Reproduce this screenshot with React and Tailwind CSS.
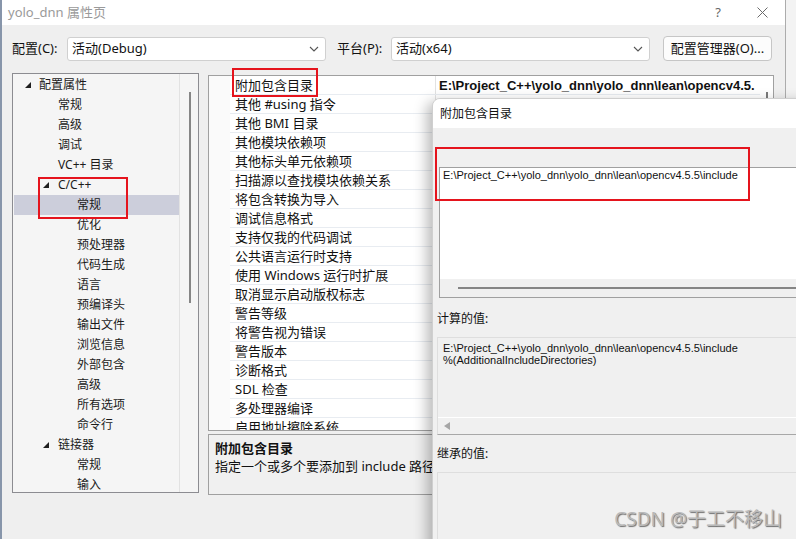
import React from "react";

const treeItems = [
  { label: "配置属性", level: 0, open: true },
  { label: "常规", level: 1 },
  { label: "高级", level: 1 },
  { label: "调试", level: 1 },
  { label: "VC++ 目录", level: 1 },
  { label: "C/C++", level: 1, open: true },
  { label: "常规", level: 2, selected: true },
  { label: "优化", level: 2 },
  { label: "预处理器", level: 2 },
  { label: "代码生成", level: 2 },
  { label: "语言", level: 2 },
  { label: "预编译头", level: 2 },
  { label: "输出文件", level: 2 },
  { label: "浏览信息", level: 2 },
  { label: "外部包含", level: 2 },
  { label: "高级", level: 2 },
  { label: "所有选项", level: 2 },
  { label: "命令行", level: 2 },
  { label: "链接器", level: 1, open: true },
  { label: "常规", level: 2 },
  { label: "输入", level: 2 },
];

const props = [
  "附加包含目录",
  "其他 #using 指令",
  "其他 BMI 目录",
  "其他模块依赖项",
  "其他标头单元依赖项",
  "扫描源以查找模块依赖关系",
  "将包含转换为导入",
  "调试信息格式",
  "支持仅我的代码调试",
  "公共语言运行时支持",
  "使用 Windows 运行时扩展",
  "取消显示启动版权标志",
  "警告等级",
  "将警告视为错误",
  "警告版本",
  "诊断格式",
  "SDL 检查",
  "多处理器编译",
  "启用地址擦除系统",
];

const PATH = "E:\\Project_C++\\yolo_dnn\\yolo_dnn\\lean\\opencv4.5.5\\include";

function Triangle() {
  return (
    <svg width="6" height="6" viewBox="0 0 6 6" className="shrink-0">
      <polygon points="6,0 6,6 0,6" fill="#1f1f1f" />
    </svg>
  );
}

function Chevron() {
  return (
    <svg width="10" height="6" viewBox="0 0 10 6" className="shrink-0">
      <polyline points="1,1 5,5 9,1" fill="none" stroke="#555" strokeWidth="1.1" />
    </svg>
  );
}

function Combo({ text }) {
  return (
    <div className="flex h-[24px] w-[259px] items-center justify-between rounded-[3px] border border-[#d0d0d0] bg-white pl-[4px] pr-[6px]">
      <span>{text}</span>
      <Chevron />
    </div>
  );
}

function TreeRow({ item }) {
  const indent = item.level === 0 ? "pl-[11px]" : item.level === 1 ? "pl-[29px]" : "pl-[63px]";
  return (
    <div
      className={`flex h-[20px] items-center ${indent} ${item.selected ? "bg-[#cccedb]" : ""}`}
    >
      {item.open ? (
        <>
          <Triangle />
          <span className={item.level === 0 ? "ml-[8px]" : "ml-[9px]"}>{item.label}</span>
        </>
      ) : (
        <span className={item.level === 1 ? "ml-[15px]" : ""}>{item.label}</span>
      )}
    </div>
  );
}

function Tree() {
  return (
    <div className="ml-[10px] flex h-[420px] w-[187px] shrink-0 border border-[#8c8c91] bg-[#f5f5f5] text-[12px] text-[#1b1b1b]">
      <div className="w-[166px] overflow-hidden pl-[1px] pt-[1px]">
        {treeItems.map((it, i) => (
          <TreeRow key={i} item={it} />
        ))}
      </div>
      <div className="flex flex-1 justify-center border-l border-[#e2e2e2] pt-[18px]">
        <div className="ml-[1px] h-[211px] w-[2px] bg-[#868686]" />
      </div>
    </div>
  );
}

function Grid() {
  return (
    <div className="flex h-[356px] border border-[#a0a0a0] bg-white text-[13px] text-[#111]">
      <div className="w-[21px] shrink-0 bg-[#fafafa]" />
      <div className="flex-1 overflow-hidden">
        {props.map((p, i) => (
          <div key={i} className="flex h-[19px] border-b border-[#e8ecf1]">
            <div className="flex w-[205px] shrink-0 items-center overflow-hidden whitespace-nowrap pl-[5px] pt-[2px]">
              {p}
            </div>
            <div className="flex flex-1 items-center overflow-hidden whitespace-nowrap border-l border-[#e2e2e2] pl-[3px] pt-[1px]">
              {i === 0 && (
                <span className="font-['Liberation_Sans',sans-serif] text-[13px] font-bold">
                  E:\Project_C++\yolo_dnn\yolo_dnn\lean\opencv4.5.
                </span>
              )}
            </div>
          </div>
        ))}
      </div>
      <div className="flex w-[13px] shrink-0 justify-center pt-[16px]">
        <div className="h-[120px] w-[2px] bg-[#7a7a7a]" />
      </div>
    </div>
  );
}

function Description() {
  return (
    <div className="mt-[3px] h-[61px] overflow-hidden border border-[#a0a0a0] bg-[#f0f0f0] pl-[6px] pt-[4px] text-[13px] leading-[18px] text-[#111]">
      <div className="font-bold">附加包含目录</div>
      <div className="w-[217px] overflow-hidden whitespace-nowrap">
        指定一个或多个要添加到 include 路径中的目录
      </div>
    </div>
  );
}

function Dialog() {
  return (
    <div className="absolute left-[432px] top-[98px] flex h-[470px] w-[420px] flex-col overflow-hidden rounded-tl-[8px] border border-[#cfcfcf] bg-[#f0f0f0] text-[12px] text-[#111] shadow-[-5px_4px_14px_rgba(0,0,0,0.28)]">
      <div className="flex h-[29px] shrink-0 items-center bg-white pl-[7px]">附加包含目录</div>
      <div className="h-[39px] shrink-0" />
      <div className="ml-[6px] flex h-[131px] shrink-0 flex-col border-l border-t border-b border-[#a0a0a0]">
        <div className="h-[111px] bg-white pl-[3px] pt-[1px] font-['Liberation_Sans',sans-serif] text-[11px] leading-[13px]">
          {PATH}
        </div>
        <div className="flex flex-1 items-center bg-[#f0f0f0] pl-[18px]">
          <div className="h-[2px] flex-1 bg-[#858585]" />
        </div>
      </div>
      <div className="mt-[13px] flex h-[16px] items-center pl-[4px]">计算的值:</div>
      <div className="ml-[4px] mt-[10px] flex h-[98px] shrink-0 flex-col border border-b-[#a8a8a8] border-[#dedede] bg-[#f0f0f0]">
        <div className="flex-1 pl-[5px] pt-[4px] font-['Liberation_Sans',sans-serif] text-[11px] leading-[12px]">
          <div>{PATH}</div>
          <div>%(AdditionalIncludeDirectories)</div>
        </div>
        <div className="flex h-[17px] items-center border-t border-white pl-[6px]">
          <svg width="6" height="8" viewBox="0 0 6 8">
            <polygon points="6,0 6,8 0,4" fill="#a6a6a6" />
          </svg>
        </div>
      </div>
      <div className="mt-[11px] flex h-[16px] items-center pl-[4px]">继承的值:</div>
      <div className="ml-[4px] mt-[10px] h-[100px] border border-[#dedede] bg-[#f0f0f0]" />
    </div>
  );
}

export default function App() {
  return (
    <div className="relative flex h-[539px] w-[796px] overflow-hidden bg-[#f3f3f3] font-['Noto_Sans','Noto_Sans_CJK_SC',sans-serif]">
      <div className="w-[2px] shrink-0 bg-[#8795aa]" />
      <div className="flex w-[784px] shrink-0 flex-col border-r border-[#acacac] bg-[#efefef]">
        {/* title bar */}
        <div className="flex h-[25px] shrink-0 items-center bg-white pl-[6px] text-[13px] text-[#9a9a9a]">
          <span>yolo_dnn 属性页</span>
          <div className="ml-auto mr-[17px] flex items-center gap-[36px]">
            <span className="text-[13px] text-[#666]">?</span>
            <svg width="11" height="11" viewBox="0 0 11 11">
              <path d="M0.5 0.5 L10.5 10.5 M10.5 0.5 L0.5 10.5" stroke="#6a6a6a" strokeWidth="1" />
            </svg>
          </div>
        </div>

        {/* config row */}
        <div className="flex h-[48px] shrink-0 items-start pl-[10px] pt-[12px] text-[13px] text-[#111]">
          <div className="flex h-[24px] w-[55px] items-center">配置(C):</div>
          <Combo text="活动(Debug)" />
          <div className="ml-[11px] flex h-[24px] w-[54px] items-center">平台(P):</div>
          <Combo text="活动(x64)" />
          <div className="-mt-[1px] ml-[13px] flex h-[25px] w-[109px] items-center justify-center rounded-[4px] border border-[#c6c6c6] bg-[#fcfcfc]">
            配置管理器(O)...
          </div>
        </div>

        {/* panels */}
        <div className="flex">
          <Tree />
          <div className="ml-[9px] mt-[2px] w-[566px]">
            <Grid />
            <Description />
          </div>
        </div>
      </div>

      <Dialog />

      {/* annotations */}
      <div className="absolute left-[38px] top-[177px] h-[42px] w-[90px] border-2 border-[#e5141d]" />
      <div className="absolute left-[232px] top-[68px] h-[29px] w-[86px] border-2 border-[#e5141d]" />
      <div className="absolute left-[435px] top-[147px] h-[54px] w-[315px] border-2 border-[#e5141d]" />

      <div className="absolute bottom-[6px] right-[14px] text-[19px] text-[#b9b9b9] [text-shadow:1px_1px_1px_#6f6f6f]">
        CSDN @于工不移山
      </div>
    </div>
  );
}
